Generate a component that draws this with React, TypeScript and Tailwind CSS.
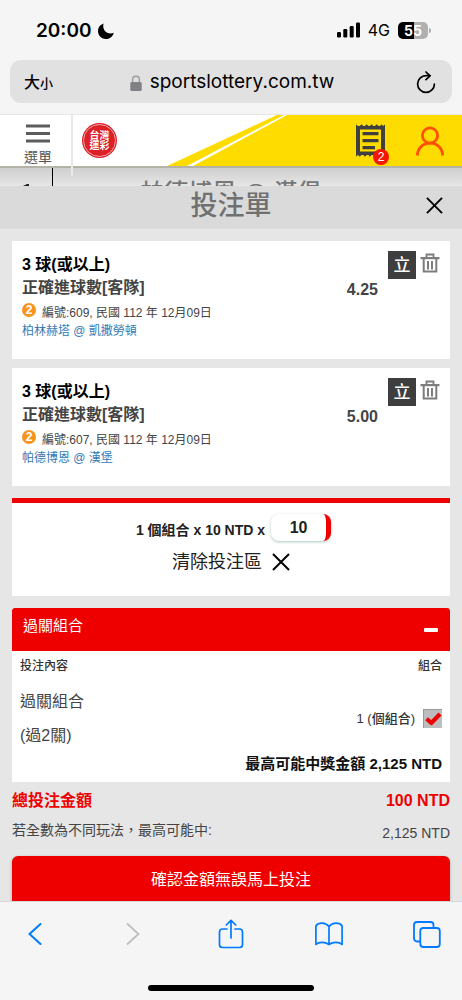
import { useState } from 'react';

const bets = [
    {
        id: 609,
        pick: '3 球(或以上)',
        market: '正確進球數[客隊]',
        info: '編號:609, 民國 112 年 12月09日',
        match: '柏林赫塔 @ 凱撒勞頓',
        odds: '4.25',
    },
    {
        id: 607,
        pick: '3 球(或以上)',
        market: '正確進球數[客隊]',
        info: '編號:607, 民國 112 年 12月09日',
        match: '帕德博恩 @ 漢堡',
        odds: '5.00',
    },
];

type Bet = (typeof bets)[number];

function CloseIcon({ className }: { className?: string }) {
    return (
        <svg viewBox="0 0 18 18" className={className} fill="none" stroke="currentColor" strokeWidth="2" aria-hidden="true">
            <path d="M1 1l16 16M17 1L1 17" />
        </svg>
    );
}

function StatusBar() {
    return (
        <div className="flex h-[60px] items-center justify-between pr-[31px] pl-9 font-['Inter',sans-serif]">
            <div className="flex items-center gap-[6px] pt-[2px]">
                <span className="text-[19px] font-semibold">20:00</span>
                <svg viewBox="0 0 16 16" className="h-4 w-4" aria-hidden="true">
                    <path d="M5.6 0.4A8 8 0 1 0 15.8 9.8C12.5 11.3 8.8 10.3 6.8 7.8C5.2 5.8 4.900 2.800 5.600 0.4Z" fill="#000" />
                </svg>
            </div>
            <div className="flex items-center">
                <svg viewBox="0 0 23 16" className="mr-2 h-4 w-[23px]" aria-hidden="true">
                    <rect x="0" y="10" width="4" height="5.5" rx="1.2" />
                    <rect x="6.3" y="7" width="4" height="8.5" rx="1.2" />
                    <rect x="12.7" y="4" width="4" height="11.5" rx="1.2" />
                    <rect x="19" y="0.5" width="4" height="15" rx="1.2" />
                </svg>
                <span className="mr-2 text-[16px]">4G</span>
                <div className="flex h-[17px] w-[30px] items-center justify-center rounded-[5px] bg-linear-to-r from-black from-54% to-[#b0b0b0] to-54% text-[14px] font-bold text-white">
                    55
                </div>
                <div className="ml-px h-[5px] w-[2px] rounded-r-full bg-[#b0b0b0]" />
            </div>
        </div>
    );
}

function AddressBar() {
    return (
        <div className="mx-[10px] mb-[11px] flex h-[43px] items-center justify-between rounded-[11px] bg-[#e1e1e2] pt-[2px] pr-4 pl-[14px]">
            <button className="flex w-9 items-baseline font-medium" aria-label="大小">
                <span className="text-[16px]">大</span>
                <span className="text-[13px]">小</span>
            </button>
            <div className="flex items-center gap-2">
                <svg viewBox="0 0 12 16" className="h-4 w-3" aria-hidden="true">
                    <path d="M2.6 8V4.6a3.4 3.4 0 0 1 6.8 0V8" fill="none" stroke="#9a9a9e" strokeWidth="1.4" />
                    <rect x="0.3" y="7" width="11.4" height="9" rx="1.6" fill="#808085" />
                </svg>
                <span className="font-['Inter',sans-serif] text-[19px]">sportslottery.com.tw</span>
            </div>
            <button className="flex w-8 justify-end" aria-label="重新載入">
                <svg viewBox="0 0 20 23" className="h-[23px] w-5" fill="none" stroke="#000" strokeWidth="1.7" strokeLinecap="round" strokeLinejoin="round" aria-hidden="true">
                    <path d="M18.4 13a8.4 8.4 0 1 1-8.4-8.4h4" />
                    <path d="M10 1l4 3.8-4 3.9" />
                </svg>
            </button>
        </div>
    );
}

function SiteHeader() {
    return (
        <header className="flex h-[54px] border-t border-b-2 border-t-[#e6e6e6] border-b-[#b3b3a8] bg-white">
            <button className="flex w-[71px] flex-col items-center gap-[6px] pt-[9px] pl-[5px] text-[#555]">
                <svg viewBox="0 0 24 19" className="h-[19px] w-6" fill="#5c5c5c" aria-hidden="true">
                    <path d="M0 0.6h24v2.8H0zM0 8.1h24v2.8H0zM0 15.6h24v2.8H0z" />
                </svg>
                <span className="text-[14px] leading-[16px]">選單</span>
            </button>
            <div className="z-10 h-[61px] w-[2px] shrink-0 bg-[#e9e9e9]" />
            <a href="#" className="flex flex-1 items-center pl-[9px]">
                <span className="flex h-[35px] w-[35px] items-center justify-center rounded-full bg-[#dd1f26] p-px">
                    <span className="flex h-full w-full flex-col items-center justify-center rounded-full border border-[#f5a5a8] text-[10px] leading-[10px] font-bold text-white">
                        <span>台灣</span>
                        <span>運彩</span>
                    </span>
                </span>
            </a>
            <svg viewBox="0 0 127 51" preserveAspectRatio="none" className="h-full w-[127px] shrink-0" aria-hidden="true">
                <path d="M1 51L111 0H128V51z" fill="#fedc00" />
                <path d="M21 51L118 0H121L27 51z" fill="#fff" />
            </svg>
            <div className="flex w-[169px] shrink-0 items-center justify-end gap-[31px] bg-[#fedc00] pr-[18px]">
                <button className="relative" aria-label="投注單">
                    <svg viewBox="0 0 29 33" className="h-[33px] w-[29px]" aria-hidden="true">
                        <path
                            fill="#3f3f3f"
                            fillRule="evenodd"
                            d="M0 0.5l2 1.5h1.8l1.7-1.7L7.300 2h1.600l1.800-1.700L12.500 2h1.400l1.700-1.700L17.300 2h1.600l1.800-1.700L22.500 2h1.500l1.600-1.700L27 2l2-1.500V32.500l-2-1.500h-1.400l-1.600 1.700L22.500 31h-1.800l-1.800 1.700L17.300 31h-1.700l-1.700 1.700L12.500 31h-1.800l-1.800 1.700L7.300 31H5.500l-1.700 1.700L2 31l-2 1.500zM4 5.500v22h21v-22z"
                        />
                        <path fill="#3f3f3f" d="M6.500 8h16v3.200h-16zM6.500 15h16v3.200h-16zM6.500 22h12.500v3.200H6.500z" />
                    </svg>
                    <span className="absolute -right-1 -bottom-2 flex h-4 w-4 items-center justify-center rounded-full bg-[#f31600] text-[12px] leading-none text-white">
                        2
                    </span>
                </button>
                <button aria-label="會員">
                    <svg viewBox="0 0 28 30" className="h-[30px] w-7" fill="none" stroke="#ff4f00" strokeWidth="2.8" aria-hidden="true">
                        <circle cx="14" cy="9.500" r="7.600" />
                        <path d="M1.400 29.500C1.600 22 7 17.200 14 17.200S26.400 22 26.600 29.500" />
                    </svg>
                </button>
            </div>
        </header>
    );
}

/* the page behind the bet slip, only its top edge shows */
function PageBehind() {
    return (
        <div className="flex h-[18px] overflow-hidden bg-linear-to-b from-[#cfcfcf] to-[#e6e6e6]">
            <div className="flex w-[53px] shrink-0 items-end justify-center border-r border-black">
                <svg viewBox="0 0 6 2" className="h-[2px] w-[6px]" aria-hidden="true">
                    <path d="M0 2L4 0H6V2z" fill="#222" />
                </svg>
            </div>
            <p className="flex-1 pt-[13px] pr-[53px] text-center text-[24px] leading-[24px] font-medium text-[#777]">帕德博恩 @ 漢堡</p>
        </div>
    );
}

function BetCard({ bet }: { bet: Bet }) {
    return (
        <article className="flex h-[118px] justify-between bg-white pt-3 pr-[10px] pl-[10px]">
            <div>
                <h3 className="text-[16px] leading-[23px] font-bold text-black">{bet.pick}</h3>
                <p className="text-[16px] leading-[23px] font-bold text-[#444]">{bet.market}</p>
                <p className="mt-1 flex gap-[6px] text-[12px] leading-[20px] text-[#444]">
                    <span className="flex h-[14px] w-[14px] items-center justify-center rounded-full bg-[#f7941d] text-[12px] leading-none font-bold text-white">2</span>
                    {bet.info}
                </p>
                <a href="#" className="block text-[12px] leading-[16px] text-[#337ab7]">{bet.match}</a>
            </div>
            <div className="flex flex-col">
                <div className="flex justify-end gap-1">
                    <button className="-mt-[2px] flex h-7 w-7 items-center justify-center bg-[#3e3e3e] text-[17px] leading-none font-medium text-white">立</button>
                    <button aria-label="刪除" className="h-5 w-5">
                        <svg viewBox="0 0 20 20" className="h-5 w-5" aria-hidden="true">
                            <path d="M6.500 4V1.500h7V4" fill="none" stroke="#7d7d7d" strokeWidth="1.800" />
                            <path d="M0.500 4h19v2.200h-19z" fill="#7d7d7d" />
                            <path d="M3.700 6v12.500h12.600V6M8 8v8.500M12 8v8.500" fill="none" stroke="#7d7d7d" strokeWidth="2" />
                        </svg>
                    </button>
                </div>
                <p className="mt-px mr-[62px] text-right text-[16px] leading-[20px] font-bold text-[#444]">{bet.odds}</p>
            </div>
        </article>
    );
}

function StakeBox() {
    const [stake, setStake] = useState('10');

    return (
        <section className="mt-3 flex h-[98px] flex-col items-center border-t-[5px] border-[#ee0000] bg-white pt-[11px]">
            <div className="flex items-center gap-[6px] pl-[5px]">
                <label htmlFor="stake" className="pt-1 text-[14px] leading-[20px] font-bold text-[#222]">1 個組合 x 10 NTD x</label>
                <input
                    id="stake"
                    value={stake}
                    onChange={(e) => setStake(e.target.value)}
                    className="h-[27px] w-[60px] rounded-lg border-r-[5px] border-[#ee0000] bg-white text-center text-[16px] font-bold text-[#222] shadow-[0_1px_3px_#a9c9b9] outline-none"
                />
            </div>
            <button className="mt-2 flex items-center gap-[10px] text-[18px] leading-[26px] text-[#222]">
                清除投注區
                <CloseIcon className="h-[18px] w-[18px] text-black" />
            </button>
        </section>
    );
}

function ComboPanel() {
    const [checked, setChecked] = useState(true);

    return (
        <section className="mt-3 bg-white pb-2">
            <button className="flex h-[43px] w-full justify-between rounded-t-[3px] bg-[#ee0000] pt-2 pr-3 pl-[11px] text-[15px] leading-[20px] text-white">
                過關組合
                <span className="mt-3 h-1 w-[14px] rounded-[1px] bg-white" />
            </button>
            <table className="w-full">
                <thead>
                    <tr className="text-[12px] leading-[18px] text-[#333]">
                        <th className="pt-[6px] pl-2 text-left font-medium">投注內容</th>
                        <th className="pt-[6px] pr-2 text-right font-medium">組合</th>
                    </tr>
                </thead>
                <tbody>
                    <tr>
                        <td className="pt-[10px] pl-2 text-[16px] leading-[34px] text-[#444]">
                            過關組合
                            <br />
                            (過2關)
                        </td>
                        <td className="pt-[9px] pr-2">
                            <div className="flex items-center justify-end gap-2">
                                <label htmlFor="combo" className="text-[13px] font-medium text-[#333]">1 (個組合)</label>
                                <span className="relative h-[19px] w-[19px]">
                                    <input
                                        id="combo"
                                        type="checkbox"
                                        checked={checked}
                                        onChange={() => setChecked(!checked)}
                                        className="block h-[19px] w-[19px] appearance-none border-t border-l border-[#999] bg-[#bdbdbd]"
                                    />
                                    {checked && (
                                        <svg viewBox="0 0 19 19" className="pointer-events-none absolute inset-0" aria-hidden="true">
                                            <path d="M3.600 9.800l4.700 4.200L17 5" fill="none" stroke="#ee0000" strokeWidth="4.200" strokeLinejoin="round" />
                                        </svg>
                                    )}
                                </span>
                            </div>
                        </td>
                    </tr>
                </tbody>
            </table>
            <p className="pr-2 text-right text-[15px] leading-[21px] font-bold text-[#111]">最高可能中獎金額 2,125 NTD</p>
        </section>
    );
}

function BrowserToolbar() {
    return (
        <nav className="flex flex-1 flex-col border-t border-[#d8d8d8] bg-[#f5f5f5]">
            <div className="flex items-center justify-between px-[21px] pt-4">
                <button aria-label="上一頁" className="flex h-8 w-7 items-center justify-center">
                    <svg viewBox="0 0 14 22" className="h-[22px] w-[14px]" fill="none" stroke="#007aff" strokeWidth="2" strokeLinecap="round" aria-hidden="true">
                        <path d="M12.500 1L1.500 11l11 10" />
                    </svg>
                </button>
                <button aria-label="下一頁" className="flex h-8 w-7 items-center justify-center">
                    <svg viewBox="0 0 14 22" className="h-[22px] w-[14px]" fill="none" stroke="#bfbfbf" strokeWidth="1.800" strokeLinecap="round" aria-hidden="true">
                        <path d="M1.500 1l11 10-11 10" />
                    </svg>
                </button>
                <button aria-label="分享" className="flex h-8 w-7 items-center justify-center">
                    <svg viewBox="0 0 26 30" className="h-[30px] w-[26px]" fill="none" stroke="#007aff" strokeWidth="1.700" strokeLinecap="round" strokeLinejoin="round" aria-hidden="true">
                        <path d="M9 10H4.500a3 3 0 0 0-3 3v12.500a3 3 0 0 0 3 3h17a3 3 0 0 0 3-3V13a3 3 0 0 0-3-3H17" />
                        <path d="M13 19V1.500M8.300 6L13 1.300 17.700 6" />
                    </svg>
                </button>
                <button aria-label="書籤" className="flex h-8 w-7 items-center justify-center">
                    <svg viewBox="0 0 28 24" className="h-6 w-7" fill="none" stroke="#007aff" strokeWidth="1.700" strokeLinejoin="round" aria-hidden="true">
                        <path d="M14 4.500C12 2.200 9.800 1.200 7 1.200S2 2.300 0.900 4v18.500c1.500-1.500 3.600-2.200 6.100-2.200s5 .7 7 2.200c2-1.500 4.500-2.200 7-2.200s4.600.7 6.100 2.200V4C26 2.300 23.800 1.200 21 1.200S16 2.200 14 4.500zV22.500" />
                    </svg>
                </button>
                <button aria-label="分頁" className="flex h-8 w-7 items-center justify-center">
                    <svg viewBox="0 0 28 27" className="h-[27px] w-7" fill="none" stroke="#007aff" strokeWidth="1.800" aria-hidden="true">
                        <path d="M7 20.500H4a3 3 0 0 1-3-3V4a3 3 0 0 1 3-3h13.500a3 3 0 0 1 3 3v3" />
                        <rect x="7.300" y="7" width="19.500" height="19" rx="3" />
                    </svg>
                </button>
            </div>
            <div className="mx-auto mt-auto mb-[9px] h-[6px] w-[36%] rounded-full bg-black" />
        </nav>
    );
}

export default function App() {
    return (
        <div className="flex min-h-screen flex-col bg-[#e6e6e6] font-['Liberation_Sans','Noto_Sans_CJK_TC',sans-serif] text-black">
            {/* BROWSER TOP */}
            <div className="bg-[#f5f5f5]">
                <StatusBar />
                <AddressBar />
            </div>

            <SiteHeader />
            <PageBehind />

            {/* BET SLIP */}
            <div className="grid grid-cols-[1fr_auto_1fr] items-center bg-[#dadada]">
                <h2 className="col-start-2 pb-[3px] text-[27px] leading-[40px] font-medium text-[#707070]">投注單</h2>
                <button aria-label="關閉" className="mr-[19px] mb-1 justify-self-end">
                    <CloseIcon className="h-[17px] w-[17px]" />
                </button>
            </div>

            <main className="px-3 pt-3">
                <div className="flex flex-col gap-[9px]">
                    {bets.map((bet) => (
                        <BetCard key={bet.id} bet={bet} />
                    ))}
                </div>

                <StakeBox />
                <ComboPanel />

                {/* TOTALS */}
                <dl>
                    <div className="flex justify-between pt-[7px] text-[16px] leading-[24px] font-bold text-[#ee0000]">
                        <dt>總投注金額</dt>
                        <dd>100 NTD</dd>
                    </div>
                    <div className="flex justify-between pt-[6px] text-[14px] leading-[22px] text-[#444]">
                        <dt>若全數為不同玩法，最高可能中:</dt>
                        <dd className="pt-[3px]">2,125 NTD</dd>
                    </div>
                </dl>

                <button className="mt-3 h-[45px] w-full rounded-t-md bg-[#ee0000] pt-[2px] text-[16px] text-white shadow-[0_1px_3px_#aaa]">
                    確認金額無誤馬上投注
                </button>
            </main>

            <BrowserToolbar />
        </div>
    );
}
